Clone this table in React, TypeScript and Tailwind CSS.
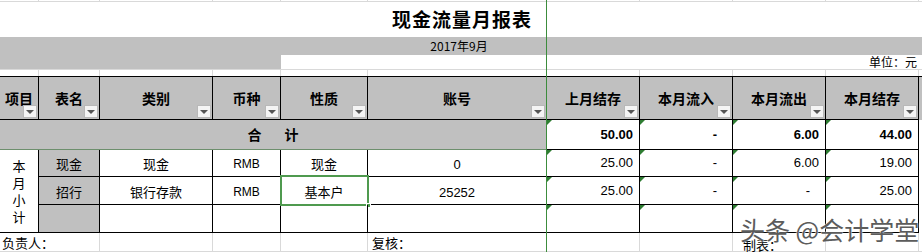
const cols = 'grid grid-cols-[39px_61px_113px_68px_87px_179px_93px_93px_93px_93px]'
const cjk = "font-['Noto_Sans_CJK_SC',sans-serif]"
const num = "font-['Liberation_Sans',Arial,sans-serif]"

function Flag() {
  return (
    <span className="absolute left-0 top-0 h-0 w-0 border-r-[5px] border-t-[5px] border-r-transparent border-t-[#2e7d32]" />
  )
}

function Dropdown() {
  return (
    <span className="absolute bottom-[1px] right-[1px] flex h-[13px] w-[14px] items-center justify-center border border-[#b8b8b8] bg-[#f4f4f4]">
      <span className="h-0 w-0 border-x-[4px] border-t-[4px] border-x-transparent border-t-[#555]" />
    </span>
  )
}

const headers = ['项目', '表名', '类别', '币种', '性质', '账号', '上月结存', '本月流入', '本月流出', '本月结存']

const rows = [
  { name: '现金', kind: '现金', cur: 'RMB', type: '现金', acct: '0', vals: ['25.00', '-', '6.00', '19.00'] },
  { name: '招行', kind: '银行存款', cur: 'RMB', type: '基本户', acct: '25252', vals: ['25.00', '-', '-', '25.00'] },
  { name: '', kind: '', cur: '', type: '', acct: '', vals: ['', '', '', ''] },
]

function NumCell({ value, bold }: { value: string; bold?: boolean }) {
  const dash = value === '-'
  return (
    <div
      className={[
        'relative flex items-center justify-end border-b border-r border-black text-[13px]',
        dash ? 'pr-[15px]' : 'pr-[6px]',
        bold ? 'font-bold' : '',
        num,
      ].join(' ')}
    >
      <Flag />
      {value}
    </div>
  )
}

export default function App() {
  return (
    <div className={`relative h-[252px] w-[922px] overflow-hidden bg-white text-black ${cjk}`}>
      {/* top strip */}
      <div className={`${cols} h-[2px] border-b border-[#d9d9d9]`}>
        {headers.map((h) => (
          <div key={h} className="border-r border-[#d9d9d9]" />
        ))}
      </div>

      <div className="flex h-[35px] items-center justify-center pl-[2px]">
        <h1 className="m-0 text-[19px] font-bold tracking-[1px]">现金流量月报表</h1>
      </div>

      <div className="flex h-[18px] items-center justify-center bg-[#c0c0c0] pr-[4px] text-[12px]">2017年9月</div>

      <div className="flex h-[15px] border-b border-[#d9d9d9]">
        <div className="w-[281px] bg-[#c0c0c0]" />
        <div className="flex flex-1 items-center justify-end pr-[5px] text-[12px]">单位：元</div>
      </div>

      <div className={`${cols} h-[6px]`}>
        {headers.map((h) => (
          <div key={h} className="border-r border-[#d9d9d9]" />
        ))}
      </div>

      {/* header */}
      <div className={`${cols} h-[44px] border-t border-black bg-[#c0c0c0]`}>
        {headers.map((h, i) => (
          <div
            key={h}
            className={[
              'relative flex items-center justify-center border-b border-r border-b-black pt-[1px] text-[14px] font-bold',
              i === 5 ? 'border-r-[#3c8c3c]' : 'border-r-black',
            ].join(' ')}
          >
            {h}
            <Dropdown />
          </div>
        ))}
      </div>

      {/* total */}
      <div className={`${cols} h-[30px]`}>
        <div className="col-span-6 flex items-center justify-center gap-[23px] border-b border-r border-b-[#6d8f6d] border-r-[#3c8c3c] bg-[#c0c0c0] text-[14px] font-bold">
          <span>合</span>
          <span>计</span>
        </div>
        <NumCell value="50.00" bold />
        <NumCell value="-" bold />
        <NumCell value="6.00" bold />
        <NumCell value="44.00" bold />
      </div>

      {/* detail rows */}
      <div className={`${cols} grid-rows-[27px_28px_28px] text-[13px]`}>
        <div className="row-span-3 flex flex-col items-center justify-center border-b border-r border-black text-[13px] leading-[17px]">
          <span>本</span>
          <span>月</span>
          <span>小</span>
          <span>计</span>
        </div>
        {rows.map((r, ri) => (
          <div key={ri} className="contents">
            <div className="flex items-end justify-center border-b border-r border-black bg-[#c0c0c0] pb-[3px]">{r.name}</div>
            <div className="flex items-end justify-center border-b border-r border-black pb-[3px]">{r.kind}</div>
            <div className={`flex items-end justify-center border-b border-r border-black pb-[3px] text-[12px] ${num}`}>
              {r.cur}
            </div>
            <div className="relative flex items-end justify-center border-b border-r border-black pb-[3px]">
              {r.type}
              {ri === 1 && (
                <span className="absolute -left-[1px] -top-[2px] h-[31px] w-[89px] border-2 border-[#4f9a4f]">
                  <span className="absolute -bottom-[4px] -right-[4px] h-[5px] w-[5px] border border-white bg-[#4f9a4f]" />
                </span>
              )}
            </div>
            <div className={`flex items-end justify-center border-b border-r border-b-black border-r-[#3c8c3c] pb-[2px] ${num}`}>
              {r.acct}
            </div>
            {r.vals.map((v, vi) => (
              <NumCell key={vi} value={v} />
            ))}
          </div>
        ))}
      </div>

      {/* footer */}
      <div className={`${cols} h-[19px] border-b border-[#d9d9d9] text-[13px]`}>
        <div className="col-span-2 flex items-center border-r border-[#d9d9d9] pl-[2px]">负责人：</div>
        <div className="border-r border-[#d9d9d9]" />
        <div className="border-r border-[#d9d9d9]" />
        <div className="border-r border-[#d9d9d9]" />
        <div className="flex items-center border-r border-r-[#3c8c3c] pl-[4px]">复核：</div>
        <div className="border-r border-[#d9d9d9]" />
        <div className="border-r border-[#d9d9d9]" />
        <div className="flex items-start border-r border-[#d9d9d9] pl-[10px] pt-[4px] leading-[15px]">制表：</div>
        <div className="border-r border-[#d9d9d9]" />
      </div>

      {/* frozen-column line */}
      <div className="pointer-events-none absolute bottom-0 left-[546px] top-0 w-px bg-[#3c8c3c]" />

      {/* watermark */}
      <div className="pointer-events-none absolute left-[740px] top-[214px] whitespace-nowrap text-[25px] leading-[30px] text-[#5c5c5c] [text-shadow:0_0_2px_#fff,0_0_1px_#fff]">
        头条 @会计学堂
      </div>
    </div>
  )
}
